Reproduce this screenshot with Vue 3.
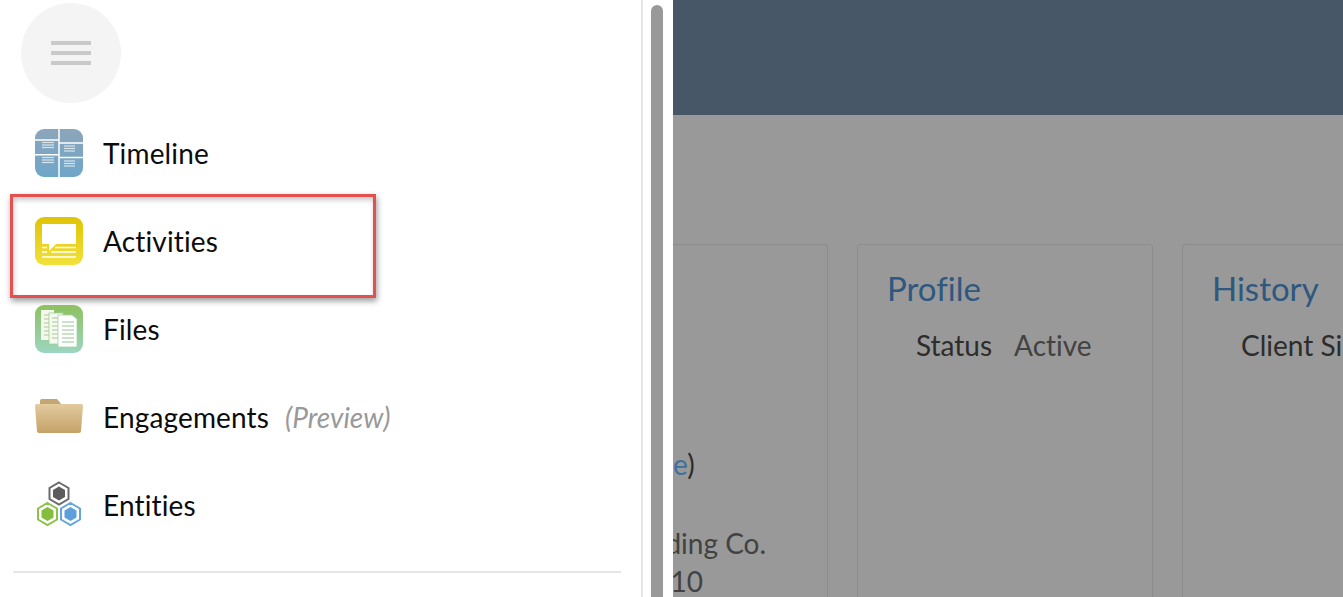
<script setup>
const rows = [
	{ label: 'Timeline', icon: 'timeline' },
	{ label: 'Activities', icon: 'activities', marked: true },
	{ label: 'Files', icon: 'files' },
	{ label: 'Engagements', icon: 'folder', note: '(Preview)' },
	{ label: 'Entities', icon: 'entities' }
];

const timelineLines = [
	[7, 19, 13.5], [7, 19, 16], [7, 19, 18.5],
	[7, 19, 28.5], [7, 19, 31], [7, 19, 33.5],
	[29, 40, 17], [29, 40, 19.5], [29, 40, 22],
	[29, 40, 32], [29, 40, 34.5], [29, 40, 37]
];

const fileLines = [9, 13, 17, 21, 25, 29];
</script>

<template>
	<div class="page">
		<aside class="side">
			<div class="side__panel">
				<button class="burger" type="button">
					<span></span>
					<span></span>
					<span></span>
				</button>

				<ul class="menu">
					<li v-for="row in rows" :key="row.label" class="menu__row">
						<svg class="menu__icon" width="48" height="48" viewBox="0 0 48 48">
							<defs>
								<linearGradient id="grad-blue" x1="0" y1="0" x2="0" y2="1">
									<stop offset="0" stop-color="#8da5ba" />
									<stop offset="1" stop-color="#6ea6c9" />
								</linearGradient>
								<linearGradient id="grad-yellow" x1="0" y1="0" x2="0" y2="1">
									<stop offset="0" stop-color="#dfc305" />
									<stop offset="1" stop-color="#f2e13c" />
								</linearGradient>
								<linearGradient id="grad-green" x1="0" y1="0" x2="0" y2="1">
									<stop offset="0" stop-color="#8dc15f" />
									<stop offset="1" stop-color="#9cd6c0" />
								</linearGradient>
								<linearGradient id="grad-folder" x1="0" y1="0" x2="0" y2="1">
									<stop offset="0" stop-color="#e2cb9f" />
									<stop offset="1" stop-color="#c5a268" />
								</linearGradient>
							</defs>

							<g v-if="row.icon === 'timeline'">
								<rect width="48" height="48" rx="9" fill="url(#grad-blue)" />
								<path d="M24 0V48M0 11H24M0 25.7H24M24 14H48M24 28.5H48" stroke="#fff" stroke-width="1.5" fill="none" />
								<path v-for="(l, i) in timelineLines" :key="i" :d="`M${l[0]} ${l[2]}H${l[1]}`" stroke="#d8e4ec" stroke-width="1.2" />
							</g>

							<g v-else-if="row.icon === 'activities'">
								<rect width="48" height="48" rx="9" fill="url(#grad-yellow)" />
								<path d="M7 7H41V27H21L14 34V27H7Z" fill="#fff" />
								<path d="M7 30.5H12M7 35H12M20 30.5H41M16 35H41M7 40H41" stroke="#fff" stroke-width="1.4" />
							</g>

							<g v-else-if="row.icon === 'files'">
								<rect width="48" height="48" rx="9" fill="url(#grad-green)" />
								<rect x="6" y="5" width="13" height="30" fill="#f4f8ee" />
								<path d="M9 10H19M9 14H19M9 18H19M9 22H19M9 26H19M9 30H19" stroke="#a9c98f" stroke-width="1.2" />
								<rect x="14" y="8" width="14" height="31" fill="#f6f9f2" stroke="#a4cf93" stroke-width="0.8" />
								<path d="M17 13H28M17 17H28M17 21H28M17 25H28M17 29H28M17 33H28" stroke="#a9c98f" stroke-width="1.2" />
								<path d="M23 10H37L42 14V42H23Z" fill="#fff" stroke="#a4d0a2" stroke-width="0.8" />
								<path v-for="y in fileLines" :key="y" :d="`M27 ${y + 8}H39`" stroke="#a5cfa5" stroke-width="1.2" />
							</g>

							<g v-else-if="row.icon === 'folder'">
								<path d="M5 8Q5 6 7 6H22L27 12H5Z" fill="#c4a673" />
								<path d="M1.5 11H46.5Q48 11 48 13L46 38Q46 40 44 40H4Q2 40 2 38L0 13Q0 11 1.5 11Z" fill="url(#grad-folder)" />
							</g>

							<g v-else>
								<path d="M24 1.5L33.5 7V18L24 23.5L14.5 18V7Z" fill="#fff" stroke="#6a6a6a" stroke-width="2" />
								<path d="M24 5.5L30 9V16L24 19.5L18 16V9Z" fill="#5c5c5c" />
								<path d="M12.5 22L22 27.5V38.5L12.5 44L3 38.5V27.5Z" fill="#fff" stroke="#8cc14a" stroke-width="2" />
								<path d="M12.5 26L18.5 29.5V36.5L12.5 40L6.5 36.5V29.5Z" fill="#84bd3c" />
								<path d="M35.5 22L45 27.5V38.5L35.5 44L26 38.5V27.5Z" fill="#fff" stroke="#64a6da" stroke-width="2" />
								<path d="M35.5 26L41.5 29.5V36.5L35.5 40L29.5 36.5V29.5Z" fill="#5ba0dc" />
							</g>
						</svg>
						<span class="menu__label">{{ row.label }}</span>
						<em v-if="row.note" class="menu__note">{{ row.note }}</em>
						<span v-if="row.marked" class="menu__mark"></span>
					</li>
				</ul>

				<hr class="side__line">
			</div>
			<div class="side__scroll"></div>
		</aside>

		<main class="main">
			<header class="main__head"></header>
			<section class="cards">
				<article class="card card--first">
					<p class="card__link">(Change<b>)</b></p>
					<p class="card__line card__line--name">Holding Co.</p>
					<p class="card__line card__line--unit">Ste 10</p>
				</article>
				<article class="card">
					<h2 class="card__title">Profile</h2>
					<p class="card__row">Status<span>Active</span></p>
				</article>
				<article class="card">
					<h2 class="card__title">History</h2>
					<p class="card__row">Client Since</p>
				</article>
			</section>
		</main>
	</div>
</template>

<style>
html,
body {
	margin: 0;
	overflow: hidden;
	background: #fff;
}
</style>

<style scoped>
.page {
	display: flex;
	height: 597px;
	overflow: hidden;
	font-family: Lato, "Open Sans", sans-serif;
	font-variant-ligatures: none;
}

.side {
	display: flex;
	flex: 0 0 673px;
	background: #fff;
}

.side__panel {
	box-sizing: border-box;
	width: 643px;
	height: 100%;
	padding-top: 3px;
	border-right: 2px solid #e6e6e6;
}

.side__scroll {
	width: 12px;
	margin: 5px 0 0 8px;
	border-radius: 6px 6px 0 0;
	background: #999;
}

.burger {
	display: flex;
	flex-direction: column;
	justify-content: center;
	align-items: center;
	gap: 6px;
	width: 100px;
	height: 100px;
	margin: 0 0 6px 21px;
	padding: 0;
	border: none;
	border-radius: 50%;
	background: #f4f4f4;
}

.burger span {
	width: 40px;
	height: 4px;
	background: #c9c9c9;
}

.menu {
	margin: 0;
	padding: 0;
	list-style: none;
}

.menu__row {
	position: relative;
	display: flex;
	align-items: center;
	height: 88px;
	padding-left: 35px;
	font-size: 28px;
	color: #0c0c0c;
}

.menu__icon {
	flex: none;
	margin-right: 20px;
}

.menu__label {
	letter-spacing: 0.15px;
}

.menu__note {
	margin-left: 16px;
	font-size: 28px;
	color: #999;
}

.menu__mark {
	position: absolute;
	top: -3px;
	left: 10px;
	width: 366px;
	height: 104px;
	box-sizing: border-box;
	border: 3px solid #e25050;
	box-shadow: 1px 3px 6px rgba(0, 0, 0, 0.4), inset 1px 3px 5px rgba(0, 0, 0, 0.22);
}

.side__line {
	height: 2px;
	margin: 22px 20px 0 13px;
	border: none;
	background: #e6e6e6;
}

.main {
	flex: 1;
	min-width: 0;
	overflow: hidden;
	background: #999;
}

.main__head {
	height: 115px;
	background: #475767;
}

.cards {
	display: flex;
	gap: 29px;
	margin: 129px 0 0 -141px;
}

.card {
	flex: none;
	box-sizing: border-box;
	width: 296px;
	height: 400px;
	padding: 24px 30px;
	border: 1px solid #8c8c8c;
	border-radius: 3px;
	color: #2c2c2c;
	font-size: 28px;
}

.card--first {
	padding: 203px 0 0 0;
}

.card__title {
	margin: -1px 0 0 -1px;
	font-size: 33px;
	font-weight: 400;
	line-height: 40px;
	color: #2e5880;
}

.card__row {
	margin: 21px 0 0 28px;
	line-height: 32px;
	white-space: nowrap;
}

.card__row span {
	margin-left: 22px;
	color: #424242;
}

.card__link {
	margin: 0;
	padding-left: 55px;
	line-height: 32px;
	color: #3f6f9c;
}

.card__link b {
	font-weight: 400;
	color: #2c2c2c;
}

.card__line {
	margin: 0;
	line-height: 38px;
	white-space: nowrap;
	color: #424242;
}

.card__line--name {
	margin-top: 44px;
	padding-left: 89px;
}

.card__line--unit {
	padding-left: 91px;
}
</style>
